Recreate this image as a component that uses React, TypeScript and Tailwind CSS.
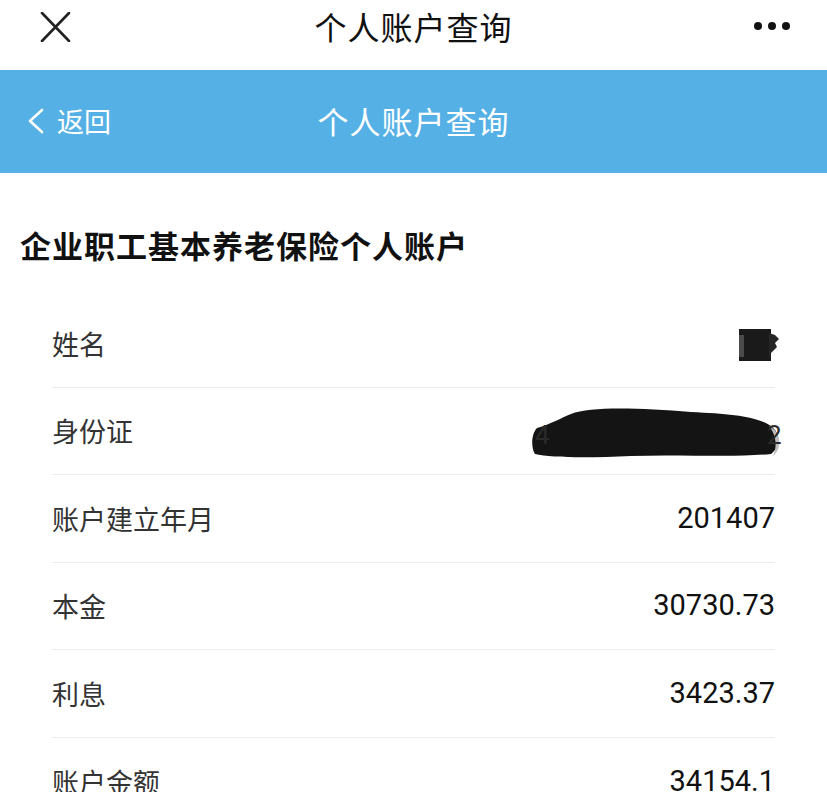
import React from 'react';

const rows: { label: string; value: string }[] = [
  { label: '姓名', value: '' },
  { label: '身份证', value: '' },
  { label: '账户建立年月', value: '201407' },
  { label: '本金', value: '30730.73' },
  { label: '利息', value: '3423.37' },
  { label: '账户金额', value: '34154.1' },
];

const cjk = { fontFamily: '"Noto Sans CJK SC", "Noto Sans", sans-serif' };
const num = { fontFamily: 'Roboto, "Liberation Sans", sans-serif' };

function NameMask() {
  return (
    <svg width="44" height="36" viewBox="0 0 44 36" className="block">
      <rect x="2" y="2" width="32" height="32" fill="#1a1a1a" />
      <rect x="2" y="8" width="5" height="22" fill="#4a4a4a" />
      <path d="M32 6 L38 8 L42 12 L38 16 L40 20 L34 26 L32 32 Z" fill="#262626" />
    </svg>
  );
}

function IdMask() {
  return (
    <svg width="252" height="56" viewBox="0 0 252 56" className="block">
      <path
        d="M40 10 C60 2 110 4 160 8 C200 10 225 12 240 22 C250 30 250 42 240 50 C200 54 150 50 100 52 C60 54 20 54 4 50 C0 44 0 30 6 24 C20 20 30 14 40 10 Z"
        fill="#141414"
      />
      <path d="M238 22 C250 28 252 44 242 52 C246 44 246 32 238 22 Z" fill="#bdbdbd" />
      <text x="4" y="40" fontSize="26" fill="#2a2a2a" fontFamily="Roboto, sans-serif">4</text>
      <text x="236" y="40" fontSize="26" fill="#2a2a2a" fontFamily="Roboto, sans-serif">2</text>
    </svg>
  );
}

export default function App() {
  return (
    <div className="w-[827px] h-[792px] overflow-hidden bg-white" style={cjk}>
      {/* top app bar */}
      <div className="relative flex h-[70px] items-center justify-center bg-white">
        <svg className="absolute left-[40px] top-[12px]" width="31" height="30" viewBox="0 0 31 30">
          <path d="M2 1 L29 29 M29 1 L2 29" stroke="#222" strokeWidth="2.6" strokeLinecap="round" />
        </svg>
        <div className="text-[32px] leading-none text-[#111] -mt-[18px] tracking-[1px]">个人账户查询</div>
        <div className="absolute right-[37px] top-[22px] flex gap-[6px]">
          <span className="h-[8px] w-[8px] rounded-full bg-[#111]" />
          <span className="h-[8px] w-[8px] rounded-full bg-[#111]" />
          <span className="h-[8px] w-[8px] rounded-full bg-[#111]" />
        </div>
      </div>

      {/* blue header */}
      <div className="relative flex h-[103px] items-center justify-center bg-[#55b1e5]">
        <div className="absolute left-[27px] top-0 flex h-full items-center gap-[12px] pb-[2px]">
          <svg width="18" height="26" viewBox="0 0 18 26">
            <path d="M15 2 L3 13 L15 24" stroke="#fff" strokeWidth="2.6" fill="none" strokeLinecap="round" strokeLinejoin="round" />
          </svg>
          <span className="text-[27px] leading-none text-white">返回</span>
        </div>
        <div className="text-[31px] leading-none text-white tracking-[1px] pb-[2px]">个人账户查询</div>
      </div>

      {/* content */}
      <div className="pt-[56px]">
        <h2 className="pl-[20px] text-[31px] font-bold leading-none text-[#111] tracking-[1px]">
          企业职工基本养老保险个人账户
        </h2>
        <div className="mt-[40px] pl-[52px] pr-[52px]">
          {rows.map((r, i) => (
            <div
              key={r.label}
              className={`flex h-[87.5px] items-center justify-between ${i < rows.length - 1 ? 'border-b border-[#ececec]' : ''}`}
            >
              <span className="text-[27px] leading-none text-[#333]">{r.label}</span>
              {i === 0 ? (
                <div className="-mr-[6px] mt-[4px]">
                  <NameMask />
                </div>
              ) : i === 1 ? (
                <div className="-mr-[8px] mt-[2px]">
                  <IdMask />
                </div>
              ) : (
                <span className="text-[29px] leading-none text-[#111]" style={num}>
                  {r.value}
                </span>
              )}
            </div>
          ))}
        </div>
      </div>
    </div>
  );
}
